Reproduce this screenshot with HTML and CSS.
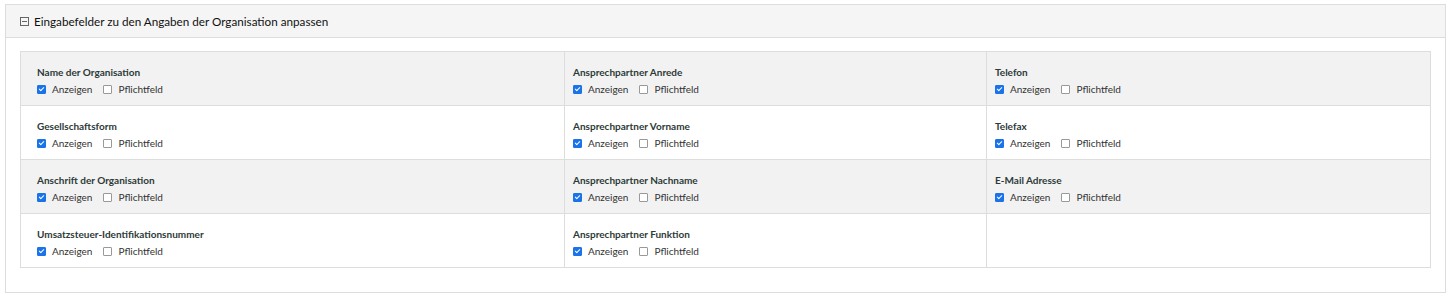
FILE: index.html
```html
<!DOCTYPE html>
<html lang="de">
<head>
  <meta charset="UTF-8" />
  <title>Eingabefelder</title>
  <link rel="stylesheet" href="styles.css">
</head>
<body>
  <div class="panel">
    <div class="panel-head">
      <span class="toggle"></span>
      Eingabefelder zu den Angaben der Organisation anpassen
    </div>
    <div class="panel-body">
      <table class="fields">
        <tr>
          <td>
            <div class="label">Name der Organisation</div>
            <div class="opts"><span class="cb on"></span>Anzeigen<span class="cb"></span>Pflichtfeld</div>
          </td>
          <td>
            <div class="label">Ansprechpartner Anrede</div>
            <div class="opts"><span class="cb on"></span>Anzeigen<span class="cb"></span>Pflichtfeld</div>
          </td>
          <td>
            <div class="label">Telefon</div>
            <div class="opts"><span class="cb on"></span>Anzeigen<span class="cb"></span>Pflichtfeld</div>
          </td>
        </tr>
        <tr>
          <td>
            <div class="label">Gesellschaftsform</div>
            <div class="opts"><span class="cb on"></span>Anzeigen<span class="cb"></span>Pflichtfeld</div>
          </td>
          <td>
            <div class="label">Ansprechpartner Vorname</div>
            <div class="opts"><span class="cb on"></span>Anzeigen<span class="cb"></span>Pflichtfeld</div>
          </td>
          <td>
            <div class="label">Telefax</div>
            <div class="opts"><span class="cb on"></span>Anzeigen<span class="cb"></span>Pflichtfeld</div>
          </td>
        </tr>
        <tr>
          <td>
            <div class="label">Anschrift der Organisation</div>
            <div class="opts"><span class="cb on"></span>Anzeigen<span class="cb"></span>Pflichtfeld</div>
          </td>
          <td>
            <div class="label">Ansprechpartner Nachname</div>
            <div class="opts"><span class="cb on"></span>Anzeigen<span class="cb"></span>Pflichtfeld</div>
          </td>
          <td>
            <div class="label">E-Mail Adresse</div>
            <div class="opts"><span class="cb on"></span>Anzeigen<span class="cb"></span>Pflichtfeld</div>
          </td>
        </tr>
        <tr>
          <td>
            <div class="label">Umsatzsteuer-Identifikationsnummer</div>
            <div class="opts"><span class="cb on"></span>Anzeigen<span class="cb"></span>Pflichtfeld</div>
          </td>
          <td>
            <div class="label">Ansprechpartner Funktion</div>
            <div class="opts"><span class="cb on"></span>Anzeigen<span class="cb"></span>Pflichtfeld</div>
          </td>
          <td></td>
        </tr>
      </table>
    </div>
  </div>
</body>
</html>
```

FILE: styles.css
```css
body {
  margin: 4px 5px;
  font-family: Lato, "Open Sans", sans-serif;
  color: #333;
  background: white;
}
.panel {
  border: 1px solid #ddd;
}
.panel-head {
  background: #f5f5f5;
  border-bottom: 1px solid #ddd;
  height: 32px;
  padding-left: 14px;
  display: flex;
  align-items: center;
  font-size: 11.7px;
  color: #111;
}
.toggle {
  width: 7px;
  height: 7px;
  border: 1px solid #666;
  margin-right: 5px;
  position: relative;
}
.toggle::after {
  content: "";
  position: absolute;
  left: 1px;
  right: 1px;
  top: 3px;
  height: 1px;
  background: #666;
}
.panel-body {
  padding: 13px 14px 24px;
}
.fields {
  width: 100%;
  border-collapse: collapse;
  border: 1px solid #ddd;
}
.fields td {
  border: 1px solid #ddd;
  height: 53px;
  padding: 0 8px;
  vertical-align: top;
}
.fields td:nth-child(1) { width: 519px; padding-left: 16px; }
.fields td:nth-child(2) { width: 405px; }
.fields tr:nth-child(odd) td { background: #f2f2f2; }
.label {
  font-size: 10px;
  font-weight: bold;
  margin-top: 14px;
  color: #2d3a38;
}
.opts {
  display: flex;
  align-items: center;
  font-size: 10px;
  margin-top: 5px;
  color: #333;
}
.cb {
  width: 7px;
  height: 7px;
  border: 1px solid #999;
  border-radius: 1px;
  background: white;
  margin-right: 6px;
  position: relative;
}
.opts .cb:nth-of-type(2) { margin-left: 11px; }
.cb.on {
  background: #1a73e8;
  border-color: #1a73e8;
}
.cb.on::after {
  content: "";
  position: absolute;
  left: 2px;
  top: 0px;
  width: 2px;
  height: 4px;
  border: solid white;
  border-width: 0 1.3px 1.3px 0;
  transform: rotate(45deg);
}
```
